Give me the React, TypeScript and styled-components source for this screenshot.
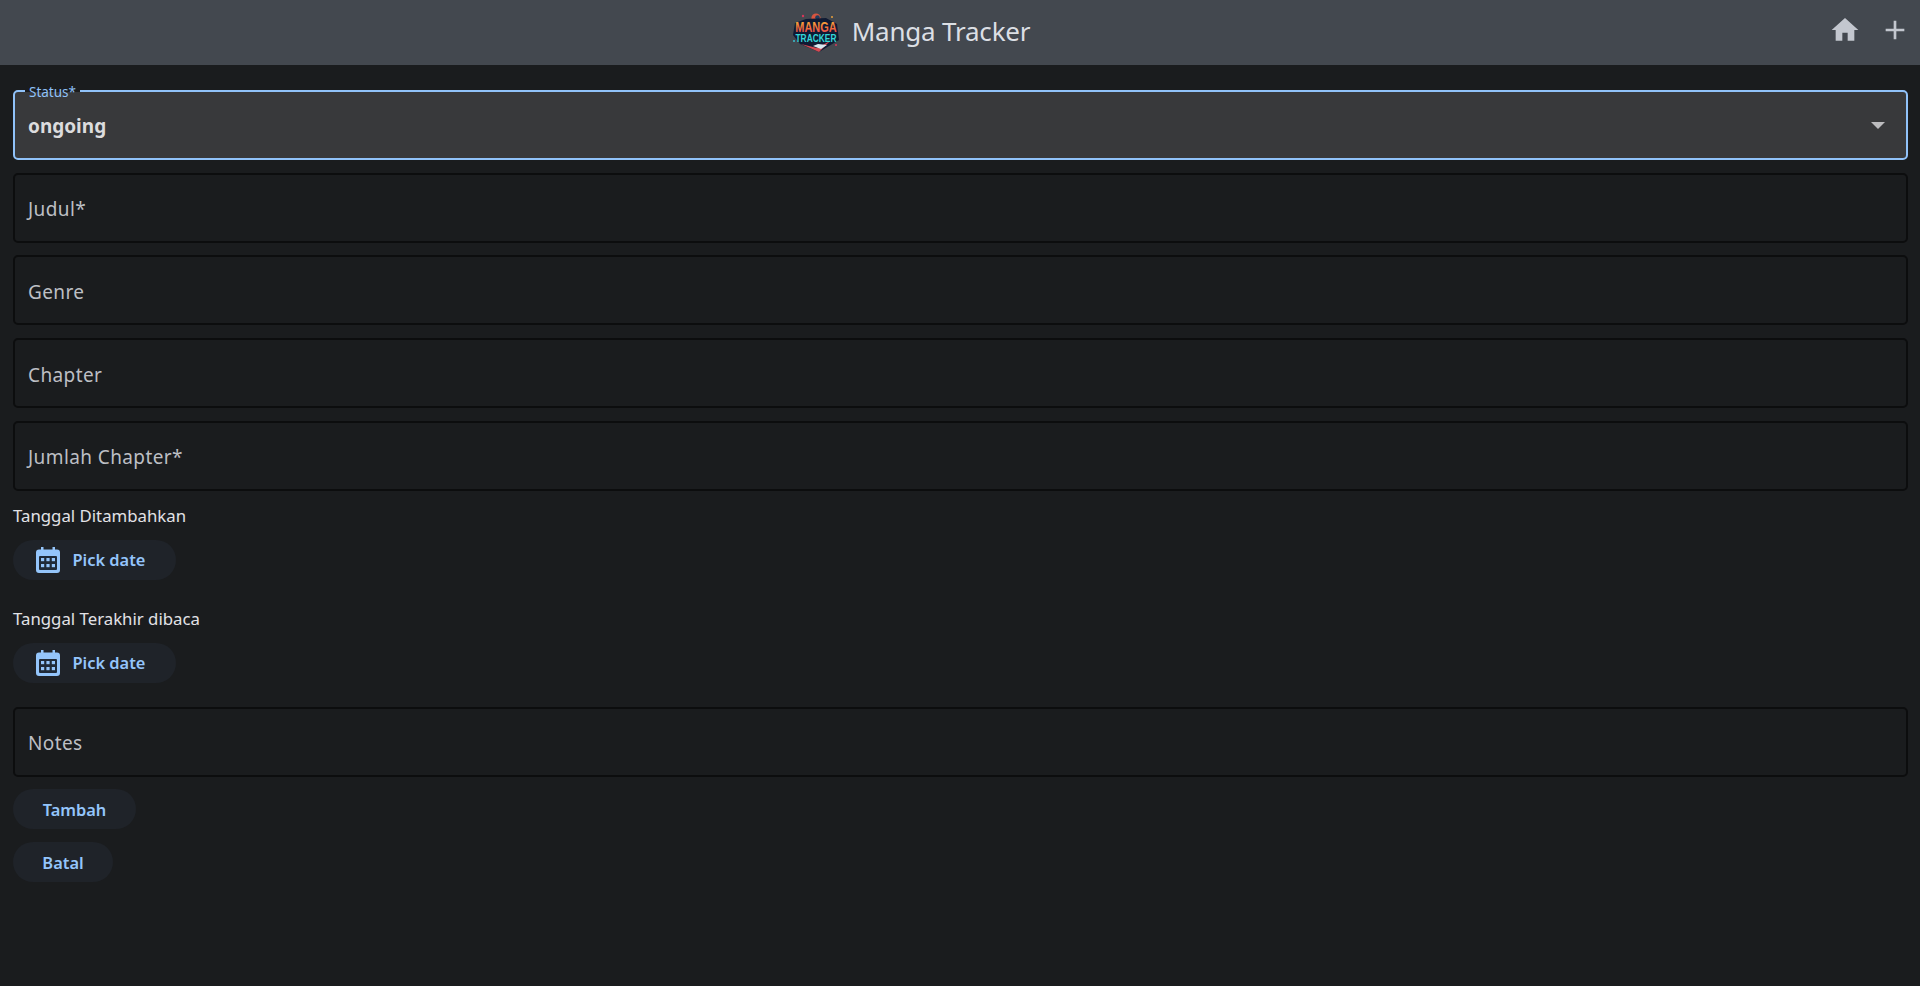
import React from "react";
import styled, { createGlobalStyle } from "styled-components";

const Global = createGlobalStyle`
  html, body { margin: 0; padding: 0; background: #1a1c1e; }
  body { font-family: "Noto Sans", "Open Sans", sans-serif; color: #e2e2e6; }
  * { box-sizing: border-box; }
`;

const Page = styled.div`
  display: flex;
  flex-direction: column;
  height: 100vh;
  overflow: hidden;
`;

const Header = styled.header`
  height: 65px;
  background: #43484f;
  display: flex;
  align-items: center;
  flex: none;
  padding-right: 9px;
`;

const Brand = styled.div`
  flex: 1;
  display: flex;
  align-items: center;
  justify-content: center;
  gap: 12px;
  margin-right: 7px;
`;

const Title = styled.h1`
  margin: 0 0 4px;
  font-size: 26px;
  font-weight: 400;
  color: #dcdfe4;
  letter-spacing: -0.2px;
`;

const HeaderActions = styled.div`
  display: flex;
  gap: 18px;
  color: #c3c7cf;
  margin-bottom: 5px;
`;

const Form = styled.main`
  display: flex;
  flex-direction: column;
  padding: 25px 12px 0 13px;
`;

const Field = styled.div<{ $gap?: number }>`
  height: 70px;
  margin-bottom: ${(p) => p.$gap ?? 12.7}px;
  border: 2px solid #0c0d0e;
  border-radius: 5px;
  padding: 3px 13px 0;
  display: flex;
  align-items: center;
  font-size: 19px;
  letter-spacing: 0.4px;
  color: #bdbfc4;
`;

const SelectField = styled.div`
  position: relative;
  height: 70px;
  margin-bottom: 12.7px;
  border: 2px solid #90c2f9;
  border-radius: 5px;
  background: #38393b;
  padding: 1px 13px 0;
  display: flex;
  align-items: center;
  justify-content: space-between;
  font-size: 19px;
  font-weight: 700;
  color: #dcdcde;
`;

const FloatingLabel = styled.span`
  position: absolute;
  left: 10px;
  top: -9px;
  padding: 0 4px;
  background: linear-gradient(to bottom, #1a1c1e 50%, transparent 50%);
  font-size: 13.5px;
  font-weight: 400;
  line-height: 18px;
  color: #90c2f9;
`;

const Caret = styled.span`
  width: 0;
  height: 0;
  margin-right: 8px;
  margin-top: -1px;
  border-left: 7px solid transparent;
  border-right: 7px solid transparent;
  border-top: 7px solid #bcbcbe;
`;

const DateLabel = styled.div`
  font-size: 16.8px;
  line-height: 24px;
  color: #e2e2e6;
  margin-bottom: 12px;
`;

const Pill = styled.button<{ $width: number; $gap?: number; $icon?: boolean }>`
  width: ${(p) => p.$width}px;
  height: 40px;
  margin-bottom: ${(p) => p.$gap ?? 0}px;
  border: 0;
  border-radius: 20px;
  background: #1f2329;
  color: #94c5fb;
  font-family: inherit;
  font-size: 16.4px;
  font-weight: 600;
  display: flex;
  align-items: center;
  justify-content: center;
  gap: 13px;
  padding: 0 ${(p) => (p.$icon ? 8 : 0)}px 0 0;
`;

const Logo = () => (
  <svg width="48" height="40" viewBox="0 0 48 40" aria-label="Manga Tracker logo">
    <defs>
      <linearGradient id="mangaFill" x1="0" y1="0" x2="0" y2="1">
        <stop offset="0" stopColor="#f6c23c" />
        <stop offset="0.55" stopColor="#f4713a" />
        <stop offset="1" stopColor="#e23b5c" />
      </linearGradient>
    </defs>
    <circle cx="24" cy="5" r="4.6" fill="#d8553f" />
    <circle cx="25.500" cy="4.500" r="2.300" fill="#1d3c5e" />
    <path d="M3 10 L14 6 L34 5 L45 11 L47 27 L27 39 L8 31 L1 22 Z" fill="#101a33" />
    <path d="M9 31 L25 35 L38 28 L27 39 Z" fill="#d34a52" />
    <path d="M21 33 L29 36 L35 32 L26 31 Z" fill="#d8e8f0" />
    <circle cx="11" cy="3" r="1.200" fill="#d8375a" />
    <circle cx="40" cy="4" r="1" fill="#e9a13b" />
    <circle cx="2" cy="28" r="1" fill="#3ac1d0" />
    <circle cx="44" cy="32" r="1" fill="#d8375a" />
    <text x="24" y="14.500" transform="scale(1 1.3)" textAnchor="middle" fontFamily="Liberation Sans" fontWeight="700" fontSize="11" fill="url(#mangaFill)">MANGA</text>
    <text x="24" y="24" transform="scale(1 1.2)" textAnchor="middle" fontFamily="Liberation Sans" fontWeight="700" fontSize="8.4" fill="#33d6d8">TRACKER</text>
  </svg>
);

const Calendar = () => (
  <svg width="24" height="26" viewBox="0 0 24 26">
    <path fill="#94c5fb" d="M5 0h2.500v2.500h9V0H19v2.500h2a3 3 0 0 1 3 3V23a3 3 0 0 1-3 3H3a3 3 0 0 1-3-3V5.500a3 3 0 0 1 3-3h2z" />
    <rect x="3" y="9" width="18" height="14" rx="1" fill="#1f2a38" />
    <g fill="#94c5fb">
      <rect x="5" y="11" width="3.200" height="3.200" />
      <rect x="10.400" y="11" width="3.200" height="3.200" />
      <rect x="15.800" y="11" width="3.200" height="3.200" />
      <rect x="5" y="17" width="3.200" height="3.200" />
      <rect x="10.400" y="17" width="3.200" height="3.200" />
      <rect x="15.800" y="17" width="3.200" height="3.200" />
    </g>
  </svg>
);

const Home = () => (
  <svg width="32" height="32" viewBox="0 0 24 24" fill="currentColor">
    <path d="M10 20v-6h4v6h5v-8h3L12 3 2 12h3v8z" />
  </svg>
);

const Plus = () => (
  <svg width="32" height="32" viewBox="0 0 24 24" fill="currentColor">
    <path d="M19 13h-6v6h-2v-6H5v-2h6V5h2v6h6v2z" />
  </svg>
);

export default function App() {
  return (
    <Page>
      <Global />
      <Header>
        <Brand>
          <Logo />
          <Title>Manga Tracker</Title>
        </Brand>
        <HeaderActions>
          <Home />
          <Plus />
        </HeaderActions>
      </Header>
      <Form>
        <SelectField>
          <FloatingLabel>Status*</FloatingLabel>
          ongoing
          <Caret />
        </SelectField>
        <Field>Judul*</Field>
        <Field>Genre</Field>
        <Field>Chapter</Field>
        <Field $gap={13}>Jumlah Chapter*</Field>
        <DateLabel>Tanggal Ditambahkan</DateLabel>
        <Pill $icon $width={163} $gap={27}>
          <Calendar />
          Pick date
        </Pill>
        <DateLabel>Tanggal Terakhir dibaca</DateLabel>
        <Pill $icon $width={163} $gap={24}>
          <Calendar />
          Pick date
        </Pill>
        <Field>Notes</Field>
        <Pill $width={123} $gap={13}>Tambah</Pill>
        <Pill $width={100}>Batal</Pill>
      </Form>
    </Page>
  );
}
